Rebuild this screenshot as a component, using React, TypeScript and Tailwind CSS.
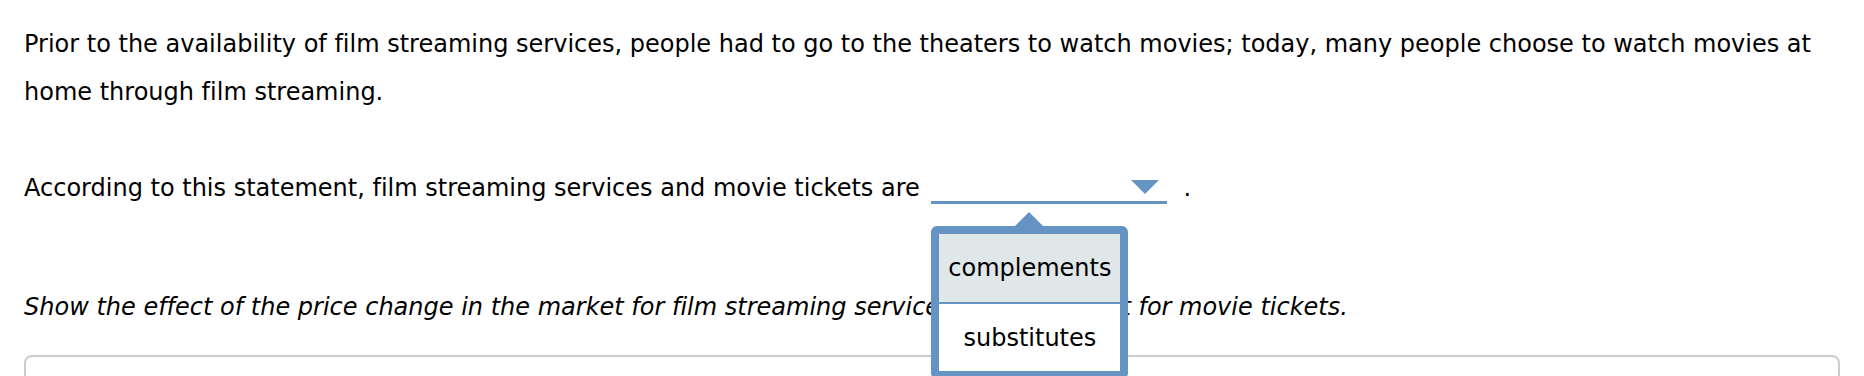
import React from 'react';

const font = { fontFamily: '"DejaVu Sans", Verdana, sans-serif' };

function Dropdown() {
  return (
    <span className="relative ml-[4px] inline-block w-[236px] h-[38px] align-[-8px] border-b-[3px] border-[#6593c4]">
      <svg
        className="absolute right-[8px] top-[14px]"
        width="28"
        height="14"
        viewBox="0 0 28 14"
      >
        <polygon points="0,0 28,0 14,14" fill="#6593c4" />
      </svg>

      {/* open list */}
      <span className="absolute left-0 top-[60px] z-10 block w-[197px]">
        <svg
          className="absolute left-[84px] top-[-14px]"
          width="28"
          height="14"
          viewBox="0 0 28 14"
        >
          <polygon points="0,14 14,0 28,14" fill="#6593c4" />
        </svg>
        <span className="block bg-white border-[8px] border-[#6593c4] rounded-[6px] leading-normal">
          <span className="flex h-[68px] items-center justify-center bg-[#dfe7e9] text-[24px] text-black">
            complements
          </span>
          <span className="block h-[2px] bg-[#6593c4]" />
          <span className="flex h-[67px] items-center justify-center bg-white text-[24px] text-black">
            substitutes
          </span>
        </span>
      </span>
    </span>
  );
}

export default function App() {
  return (
    <div className="w-[1864px] h-[376px] overflow-hidden bg-white">
      <div
        className="pt-[20px] px-[24px] text-[24px] leading-[48px] text-black [font-variant-ligatures:none]"
        style={font}
      >
        <p>
          Prior to the availability of film streaming services, people had to go to the theaters to watch movies; today, many people choose to watch movies at home through film streaming.
        </p>

        <p className="mt-[48px]">
          According to this statement, film streaming services and movie tickets are <Dropdown />
          <span className="ml-[16px]">.</span>
        </p>

        <p className="mt-[71px] italic">
          Show the effect of the price change in the market for film streaming services on the market for movie tickets.
        </p>

        <div className="mt-[24px] h-[120px] border-2 border-[#cccccc] rounded-[8px]" />
      </div>
    </div>
  );
}
